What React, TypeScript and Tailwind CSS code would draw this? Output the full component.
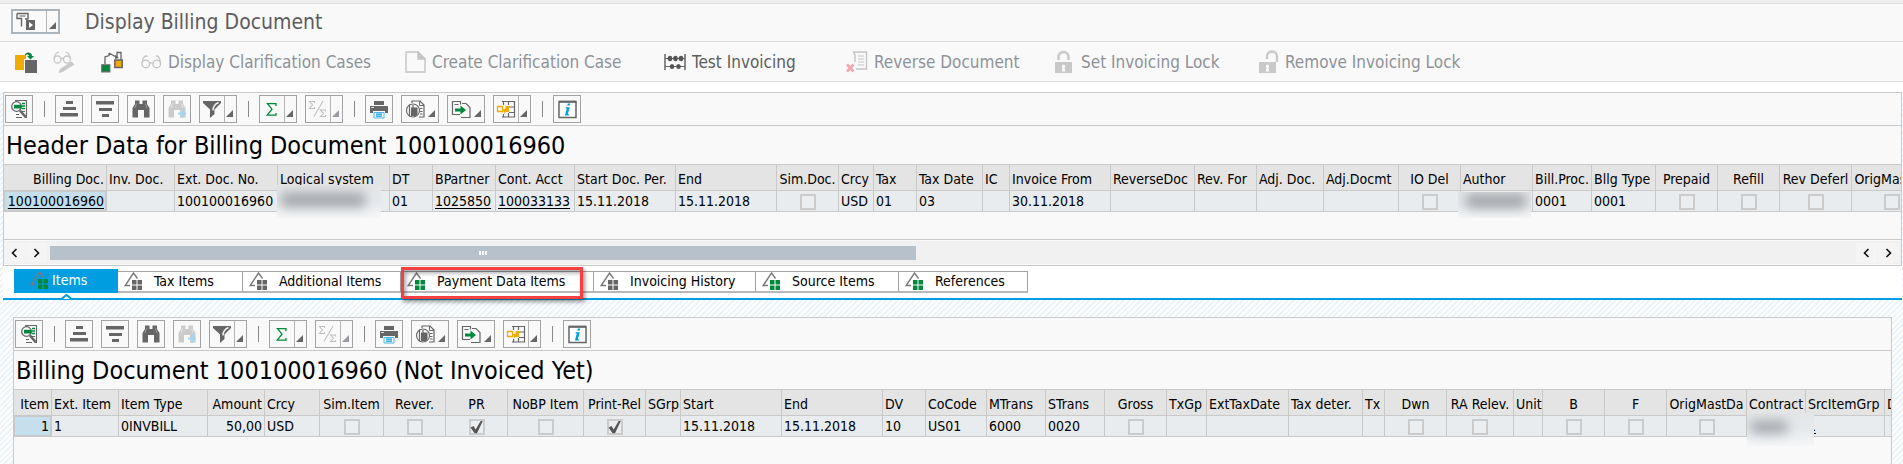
import React from "react";

type Align = "left" | "right" | "center";

interface Column {
  label: string;
  width: string;
  align?: Align;
  value?: string;
  link?: boolean;
  check?: "on" | "off";
  blur?: "system" | "author" | "contract";
}

const headerColumns: Column[] = [
  { label: "Billing Doc.", width: "w-[103px]", align: "right", value: "100100016960", link: true },
  { label: "Inv. Doc.", width: "w-[68px]" },
  { label: "Ext. Doc. No.", width: "w-[103px]", value: "100100016960" },
  { label: "Logical system", width: "w-[112px]", blur: "system" },
  { label: "DT", width: "w-[43px]", value: "01" },
  { label: "BPartner", width: "w-[63px]", value: "1025850", link: true },
  { label: "Cont. Acct", width: "w-[79px]", value: "100033133", link: true },
  { label: "Start Doc. Per.", width: "w-[101px]", value: "15.11.2018" },
  { label: "End", width: "w-[101px]", value: "15.11.2018" },
  { label: "Sim.Doc.", width: "w-[62px]", align: "center", check: "off" },
  { label: "Crcy", width: "w-[35px]", value: "USD" },
  { label: "Tax", width: "w-[43px]", value: "01" },
  { label: "Tax Date", width: "w-[66px]", value: "03" },
  { label: "IC", width: "w-[27px]" },
  { label: "Invoice From", width: "w-[101px]", value: "30.11.2018" },
  { label: "ReverseDoc", width: "w-[84px]" },
  { label: "Rev. For", width: "w-[62px]" },
  { label: "Adj. Doc.", width: "w-[67px]" },
  { label: "Adj.Docmt", width: "w-[75px]" },
  { label: "IO Del", width: "w-[62px]", align: "center", check: "off" },
  { label: "Author", width: "w-[72px]", blur: "author" },
  { label: "Bill.Proc.", width: "w-[59px]", value: "0001" },
  { label: "Bllg Type", width: "w-[64px]", value: "0001" },
  { label: "Prepaid", width: "w-[62px]", align: "center", check: "off" },
  { label: "Refill", width: "w-[62px]", align: "center", check: "off" },
  { label: "Rev Deferl", width: "w-[72px]", align: "center", check: "off" },
  { label: "OrigMastDa", width: "w-[80px]", align: "center", check: "off" },
];

const itemColumns: Column[] = [
  { label: "Item", width: "w-[38px]", align: "right", value: "1" },
  { label: "Ext. Item", width: "w-[67px]", value: "1" },
  { label: "Item Type", width: "w-[89px]", value: "0INVBILL" },
  { label: "Amount", width: "w-[57px]", align: "right", value: "50,00" },
  { label: "Crcy", width: "w-[55px]", value: "USD" },
  { label: "Sim.Item", width: "w-[64px]", align: "center", check: "off" },
  { label: "Rever.", width: "w-[62px]", align: "center", check: "off" },
  { label: "PR", width: "w-[62px]", align: "center", check: "on" },
  { label: "NoBP Item", width: "w-[76px]", align: "center", check: "off" },
  { label: "Print-Rel", width: "w-[62px]", align: "center", check: "on" },
  { label: "SGrp", width: "w-[35px]" },
  { label: "Start", width: "w-[101px]", value: "15.11.2018" },
  { label: "End", width: "w-[101px]", value: "15.11.2018" },
  { label: "DV", width: "w-[43px]", value: "10" },
  { label: "CoCode", width: "w-[61px]", value: "US01" },
  { label: "MTrans", width: "w-[59px]", value: "6000" },
  { label: "STrans", width: "w-[59px]", value: "0020" },
  { label: "Gross", width: "w-[62px]", align: "center", check: "off" },
  { label: "TxGp", width: "w-[40px]" },
  { label: "ExtTaxDate", width: "w-[82px]" },
  { label: "Tax deter.", width: "w-[74px]" },
  { label: "Tx", width: "w-[22px]" },
  { label: "Dwn", width: "w-[62px]", align: "center", check: "off" },
  { label: "RA Relev.", width: "w-[67px]", align: "center", check: "off" },
  { label: "Unit", width: "w-[29px]" },
  { label: "B", width: "w-[62px]", align: "center", check: "off" },
  { label: "F", width: "w-[62px]", align: "center", check: "off" },
  { label: "OrigMastDa", width: "w-[80px]", align: "center", check: "off" },
  { label: "Contract", width: "w-[59px]", blur: "contract" },
  { label: "SrcItemGrp", width: "w-[79px]", value: "1", link: true },
  { label: "D", width: "w-[40px]" },
];

const alignClass: Record<Align, string> = {
  left: "text-left",
  right: "text-right",
  center: "text-center",
};

const smudge = {
  system: { box: "-left-px -top-1.5 h-[33px] w-[104px]", bar: "left-1 top-2 h-3.5 w-[84px]" },
  author: { box: "-left-[3px] top-px h-[26px] w-[73px]", bar: "left-2 top-0.5 h-3.5 w-[60px]" },
  contract: { box: "left-0 -top-[3px] h-[33px] w-[67px]", bar: "left-1 top-2 h-3 w-9" },
};

function Redacted({ kind }: { kind: "system" | "author" | "contract" }) {
  return (
    <span
      aria-hidden="true"
      className={`absolute z-10 overflow-hidden bg-linear-to-b from-[#e4e5e6] via-[#e6eaed] to-[#f5f6f7] ${smudge[kind].box}`}
    >
      <span className={`absolute bg-[#a0a3a8] blur-[6px] ${smudge[kind].bar}`} />
    </span>
  );
}

function CheckCell({ label, on }: { label: string; on: boolean }) {
  return (
    <span className="relative mt-[3px] inline-block size-4 align-top">
      <input
        type="checkbox"
        aria-label={label}
        defaultChecked={on}
        className="block size-4 appearance-none border-2 border-[#cbcbcb] bg-[#ebeef0]"
      />
      {on && (
        <svg className="pointer-events-none absolute inset-0 size-4" viewBox="0 0 16 16" aria-hidden="true">
          <path d="M1.500 8.500 4.500 7l2.200 3.600L11.600 2h2.200L8 14.300H5.600z" fill="#555" />
        </svg>
      )}
    </span>
  );
}

function Grid({ columns, name }: { columns: Column[]; name: string }) {
  return (
    <div className="overflow-x-clip">
      <table aria-label={name} className="w-px table-fixed border-separate border-spacing-0 text-[14px] leading-5 text-black">
        <colgroup>
          {columns.map((c) => (
            <col key={c.label} className={c.width} />
          ))}
        </colgroup>
        <thead>
          <tr className="h-[26px] bg-[#e4e4e4]">
            {columns.map((c) => (
              <th
                key={c.label}
                scope="col"
                className={`overflow-hidden border-r border-b border-[#c9c9c9] px-[2px] pt-0.5 pb-0 font-normal whitespace-nowrap ${alignClass[c.align ?? "left"]}`}
              >
                {c.label}
              </th>
            ))}
          </tr>
        </thead>
        <tbody>
          <tr className="h-[21px] bg-[#e8ecef]">
            {columns.map((c, i) => (
              <td
                key={c.label}
                className={`relative h-[21px] border-r border-b border-[#c9c9c9] px-[2px] py-0 align-top leading-5 whitespace-nowrap ${alignClass[c.align ?? "left"]} ${i === 0 ? "bg-[#c5dfec] shadow-[inset_0_0_0_1px_#c9c9c9]" : ""}`}
              >
                {c.link ? (
                  <a href="#doc" className="underline underline-offset-2">
                    {c.value}
                  </a>
                ) : (
                  c.value
                )}
                {c.check && <CheckCell label={c.label} on={c.check === "on"} />}
                {c.blur && <Redacted kind={c.blur} />}
              </td>
            ))}
          </tr>
        </tbody>
      </table>
    </div>
  );
}

const G = "#666";

const Svg = ({ w = 28, children }: { w?: number; children: React.ReactNode }) => (
  <svg width={w} height={26} viewBox={`0 1 ${w} 26`} fill="none" aria-hidden="true" className="shrink-0">
    {children}
  </svg>
);

const Caret = ({ pale = false }: { pale?: boolean }) => (
  <svg width="7" height="7" viewBox="0 0 7 7" aria-hidden="true">
    <path d="M7 0v7H0z" fill={pale ? "#9a9aa2" : G} />
  </svg>
);

const DetailIcon = () => (
  <Svg w={26}>
    <path d="M9 5.500h11.500v17H19M10 22.500h6" stroke={G} strokeWidth="1.100" />
    <path d="M16 8.500h3M16 11h3M16 13.500h3" stroke="#00883c" strokeWidth="1.300" />
    <path d="M16 16.500h3M10 19.500h3" stroke={G} strokeWidth="1.100" />
    <circle cx="10.500" cy="11.500" r="4.800" fill="#f9f9f9" stroke={G} strokeWidth="1.300" />
    <path d="M8 9.800h7.500v3.700H8z" fill="#00883c" />
    <path d="m14 15.500 6 7" stroke={G} strokeWidth="2.600" />
  </Svg>
);

const AscIcon = () => (
  <Svg w={26}>
    <path d="M10 6h7v3h-7zM7 12h13v3H7zM4 18h18v3.500H4z" fill={G} />
  </Svg>
);

const DescIcon = () => (
  <Svg w={26}>
    <path d="M4 6h18v3.500H4zM7 13h13v3H7zM10 19h7v3h-7z" fill={G} />
  </Svg>
);

const Binoculars = ({ pale = false }: { pale?: boolean }) => (
  <Svg w={26}>
    <path
      d="M7 5.500h4.500V9h3V5.500H19V9l2.500 4v9.500H16V15h-6v7.500H4.500V13L7 9z"
      fill={pale ? "#cbcbcb" : G}
    />
    <path d="M8.500 8.500 7 13M17.500 8.500 19 13" stroke={pale ? "#e4e4e4" : "#999"} strokeWidth="1" />
    {pale && <path d="M18 14v9M14 18.500h8" stroke="#a5d8f3" strokeWidth="2" />}
  </Svg>
);

const FilterIcon = () => (
  <Svg w={24}>
    <path d="M3 6h18v2l-6.500 6.500V19L10 23v-8.500L3 8z" fill={G} />
    <path d="M18.500 7.500c-3.500 1.500-5.500 3.500-5.500 8" stroke="#f3f3f3" strokeWidth="1.400" />
  </Svg>
);

const SumIcon = () => (
  <Svg w={24}>
    <path d="M16 11V8.700H7.500L12 14.200l-4.800 6H16V18" stroke="#00883c" strokeWidth="1.300" />
  </Svg>
);

const SubtotalIcon = () => (
  <Svg w={24}>
    <path d="M8.500 8V6.500h-5l3 3.500-3 3.500h5V12M19.500 16.500v-1.500h-5l3 3.300-3 3.200h5V20M17 6 8 21.500" stroke="#c0c0c0" strokeWidth="1.100" />
  </Svg>
);

const PrintIcon = () => (
  <Svg w={26}>
    <path d="M8 6h10v4H8zM4 11h18v7h-3v-2H7v2H4z" fill={G} />
    <path d="M5 12.500h3" stroke="#d8d8d8" />
    <path d="M8 17.500h10v5.500H8z" fill="#fff" stroke="#4db3e6" />
    <path d="M10 19.200h6M10 21.200h6" stroke="#009ee0" strokeWidth="1.200" />
  </Svg>
);

const ViewIcon = () => (
  <Svg w={24}>
    <path d="M10 8V6h8l4 4v12h-5" stroke={G} strokeWidth="1.200" />
    <path d="M17.500 6v4.500H22M18 13.500h2.500M18 16.500h2.500M18 19h2.500" stroke={G} />
    <circle cx="11" cy="15.500" r="6.500" fill="#f9f9f9" stroke={G} strokeWidth="1.100" />
    <path d="M7.500 9.500v12M11 10v3" stroke={G} strokeWidth="1.200" />
    <path d="M9 12.500h6.500v7l-2 1.500H9z" fill={G} />
  </Svg>
);

const ExportIcon = () => (
  <Svg w={24}>
    <path d="M12 19.500H4.500V6.500h8v3" stroke={G} strokeWidth="1.200" />
    <path d="M6.500 9.500h4" stroke={G} />
    <path d="M14 8.500h4l4 4v10h-9" stroke={G} strokeWidth="1.200" />
    <path d="M7 13.500h5.500v-3l5.500 4.500-5.500 4.500v-3H7z" fill="#00883c" />
  </Svg>
);

const LayoutIcon = () => (
  <Svg w={24}>
    <path d="M8 6.500h13M15 12h6M15 17.500h6M8 22h13M9.500 6v4M14.500 6v4M14.500 18v4M20.500 6v16M9.500 19v3" stroke={G} strokeWidth="1.200" />
    <path d="M3.500 11.500h5v5h-5z" stroke="#f0ab00" strokeWidth="1.300" />
    <path d="M9 14h2.500v-3h3.500v6h-3.500l-1.500 1.500z" fill="#f0ab00" />
  </Svg>
);

const InfoIcon = () => (
  <Svg w={26}>
    <path d="M5 6.500h17v16H5z" fill="#fff" stroke={G} strokeWidth="1.500" />
    <path d="M5 6.800h17" stroke={G} strokeWidth="2" />
    <path d="M13.800 8.500h2.500l-.6 2h-2.400zM11.800 12.200h4l-2 7h1.500l-.4 1.300h-4l1.900-7h-1.300z" fill="#009ee0" />
  </Svg>
);

function ToolButton({ label, children, disabled }: { label: string; children: React.ReactNode; disabled?: boolean }) {
  return (
    <button type="button" aria-label={label} disabled={disabled} className="flex h-7 w-7 items-center border border-[#a3a3a3] bg-[#f9f9f9]">
      {children}
    </button>
  );
}

function MenuButton({
  label,
  children,
  split = false,
  pale = false,
}: {
  label: string;
  children: React.ReactNode;
  split?: boolean;
  pale?: boolean;
}) {
  return (
    <button type="button" aria-label={label} disabled={pale} className="flex h-7 w-[38px] border border-[#a3a3a3] bg-[#f9f9f9]">
      {children}
      <span className={`flex h-full flex-1 items-end justify-end pr-[3px] pb-[5px] ${split ? "border-l border-[#b5b5b5]" : ""}`}>
        <Caret pale={pale} />
      </span>
    </button>
  );
}

const Divider = () => (
  <span className="flex w-1.5 justify-center">
    <span className="h-4 w-px bg-[#8a8a8a]" />
  </span>
);

function GridToolbar() {
  return (
    <div role="toolbar" className="flex h-[33px] items-center gap-2 border-b border-[#c9c9c9] pl-px">
      <ToolButton label="Details"><DetailIcon /></ToolButton>
      <Divider />
      <ToolButton label="Sort in Ascending Order"><AscIcon /></ToolButton>
      <ToolButton label="Sort in Descending Order"><DescIcon /></ToolButton>
      <ToolButton label="Find"><Binoculars /></ToolButton>
      <ToolButton label="Find Next" disabled><Binoculars pale /></ToolButton>
      <MenuButton label="Set Filter" split><FilterIcon /></MenuButton>
      <Divider />
      <MenuButton label="Total" split><SumIcon /></MenuButton>
      <MenuButton label="Subtotals" split pale><SubtotalIcon /></MenuButton>
      <Divider />
      <ToolButton label="Print"><PrintIcon /></ToolButton>
      <MenuButton label="Views"><ViewIcon /></MenuButton>
      <MenuButton label="Export"><ExportIcon /></MenuButton>
      <MenuButton label="Choose Layout" split><LayoutIcon /></MenuButton>
      <Divider />
      <ToolButton label="Information"><InfoIcon /></ToolButton>
    </div>
  );
}

const Glasses = () => (
  <svg width="21" height="22" viewBox="0 0 22 22" fill="none" stroke="#c4c4c4" strokeWidth="1.400" aria-hidden="true">
    <circle cx="5" cy="13" r="4" />
    <circle cx="16.500" cy="13" r="4" />
    <path d="M1 12C2 6 4 4 7 5M20.500 12c-1-6-2.500-8-5-7M9 12.500c1-1 2.500-1 3.500 0" />
  </svg>
);

const EditGlasses = () => (
  <svg width="22" height="22" viewBox="0 0 22 22" fill="none" stroke="#c8c8c8" strokeWidth="1.300" aria-hidden="true">
    <circle cx="4.500" cy="8.500" r="3.500" />
    <circle cx="14" cy="8.500" r="3.500" />
    <path d="M1 7.500C2 3 3.500 1 6 1.500M17.500 7.500c-1-4.500-2.500-6.500-5-6M8 8c1-1 1.800-1 2.500 0" />
    <path d="m18.500 10.500 3 3-12 7.500-4 1 1.500-4z" fill="#c8c8c8" stroke="none" />
  </svg>
);

const PasteIcon = () => (
  <svg width="22" height="22" viewBox="0 0 22 22" aria-hidden="true">
    <path d="M0 4h11v4H9v11H0z" fill="#f0ab00" />
    <path d="M10 9h12v13H10z" fill="#666" />
    <path d="M10 3c3-3 7-1.500 7 2h2l-3.500 3.500L12 5h2c0-1.500-2-2-4-1z" fill="#00883c" />
  </svg>
);

const FlowIcon = () => (
  <svg width="22" height="22" viewBox="0 0 22 22" fill="none" aria-hidden="true">
    <path d="M4 13V6l4-1.500V2M8 2l8 4.500M16 6V1.500h4V9" stroke="#666" strokeWidth="1.300" />
    <path d="M14 3.500 18 7l-4 1z" fill="#666" />
    <path d="M.8 13.800h8v7h-8z" fill="#00883c" stroke="#666" strokeWidth="1.200" />
    <path d="M13.800 9h7.400v7.400h-7.400z" fill="#f0ab00" stroke="#666" strokeWidth="1.500" />
  </svg>
);

const PageIcon = () => (
  <svg width="21" height="22" viewBox="0 0 21 22" fill="none" stroke="#c4c4c4" strokeWidth="1.400" aria-hidden="true">
    <path d="M1 1h12l7 7v13H1z" />
    <path d="M13 1v7h7z" fill="#c4c4c4" />
  </svg>
);

const AbacusIcon = () => (
  <svg width="22" height="22" viewBox="0 0 22 22" fill="none" aria-hidden="true">
    <path d="M1 3v16M21 3v16" stroke="#666" strokeWidth="1.500" />
    <path d="M1 7.500h20M1 15.500h20" stroke="#666" strokeWidth="1.200" />
    <g fill="#555">
      <ellipse cx="6" cy="7.500" rx="2.300" ry="2.800" />
      <ellipse cx="11.500" cy="7.500" rx="2.300" ry="2.800" />
      <ellipse cx="17" cy="7.500" rx="2.300" ry="2.800" />
      <ellipse cx="8" cy="15.500" rx="2.300" ry="2.500" />
      <ellipse cx="14.500" cy="15.500" rx="2.300" ry="2.500" />
    </g>
  </svg>
);

const ReverseIcon = () => (
  <svg width="22" height="22" viewBox="0 0 22 22" fill="none" aria-hidden="true">
    <path d="M9 11V4L7.500 1h13v17H10" stroke="#c4c4c4" strokeWidth="1.400" />
    <path d="M12 5h6M12 8h6M12 11h6M12 14h6" stroke="#c4c4c4" strokeWidth="1.200" />
    <path d="m1 13.500 6.500 7M7.500 13.500 1 20.500" stroke="#f0a8ae" strokeWidth="2.600" />
  </svg>
);

const LockIcon = ({ open = false }: { open?: boolean }) => (
  <svg width="21" height="24" viewBox="0 0 21 24" fill="none" aria-hidden="true">
    <path d={open ? "M9 9V6.500a5 5 0 0 1 10 0V12" : "M4.500 10V7a5 5 0 0 1 10 0v3"} stroke="#c8c8c8" strokeWidth="2.400" />
    <path d="M1 12h17v11H1z" fill="#c8c8c8" />
    <path d="M9.500 14.500a2 2 0 0 1 1 3.500l.8 3.500H7.700l.8-3.500a2 2 0 0 1 1-3.500z" fill="#f9f9f9" />
  </svg>
);

const TabIcon = ({ squares }: { squares: string }) => (
  <svg width="18" height="18" viewBox="0 0 18 18" fill="none" aria-hidden="true" className="shrink-0">
    <path d="M6 13.500H1.200L9.500 1l4 5.500" stroke="#7a7a7a" strokeWidth="1.400" />
    <path d="M8 8h4.500v4.500H8zM13.500 8H18v4.500h-4.500zM8 13.500h4.500V18H8zM13.500 13.500H18V18h-4.500z" fill={squares} />
  </svg>
);

const actions = [
  { label: "Display Clarification Cases", icon: <Glasses />, width: "w-[264px]", on: false },
  { label: "Create Clarification Case", icon: <PageIcon />, width: "w-[259px]", on: false },
  { label: "Test Invoicing", icon: <AbacusIcon />, width: "w-[182px]", on: true },
  { label: "Reverse Document", icon: <ReverseIcon />, width: "w-[208px]", on: false },
  { label: "Set Invoicing Lock", icon: <LockIcon />, width: "w-[204px]", on: false },
  { label: "Remove Invoicing Lock", icon: <LockIcon open />, width: "w-[240px]", on: false },
];

const tabs = [
  { label: "Tax Items", width: "w-[125px]", squares: "#666" },
  { label: "Additional Items", width: "w-[158px]", squares: "#666" },
  { label: "Payment Data Items", width: "w-[193px]", squares: "#00883c", marked: true },
  { label: "Invoicing History", width: "w-[162px]", squares: "#666" },
  { label: "Source Items", width: "w-[143px]", squares: "#00883c" },
  { label: "References", width: "w-[129px]", squares: "#00883c" },
];

function ScrollArrow({ dir }: { dir: "left" | "right" }) {
  return (
    <button
      type="button"
      aria-label={dir === "left" ? "Scroll left" : "Scroll right"}
      className="flex h-5 w-[21px] items-center justify-center bg-[#f4f4f4]"
    >
      <svg width="7" height="10" viewBox="0 0 7 10" fill="none" stroke="#111" strokeWidth="1.600" aria-hidden="true">
        <path d={dir === "left" ? "M5.500 1 1.500 5l4 4" : "m1.500 1 4 4-4 4"} />
      </svg>
    </button>
  );
}

export default function App() {
  return (
    <div className="flex min-h-screen flex-col overflow-hidden bg-[repeating-linear-gradient(135deg,#ffffff_0px,#ffffff_2px,#eaf4fa_2px,#eaf4fa_4px)] font-['DejaVu_Sans_Condensed','DejaVu_Sans',sans-serif]">
      <header className="border-t-[3px] border-[#f0f0f0] bg-[#f9f9f9]">
        <div className="flex h-[39px] items-center gap-[25px] border-y border-[#dcdcdc] pb-0.5 pl-[11px]">
          <button type="button" aria-label="Services" className="flex h-[25px] w-[49px] border-2 border-[#a9b4bd] bg-[#f9f9f9]">
            <svg width="33" height="21" viewBox="0 0 33 21" fill="none" aria-hidden="true">
              <path d="M4 2.500h11v5.500h-3M4 2.500v5h4.500v8" stroke="#666" strokeWidth="1.400" />
              <path d="M6.500 5h6" stroke="#666" />
              <path d="M13 9h9v10h-9z" fill="#666" />
              <path d="m16 11 4 3-4 3z" fill="#fff" />
            </svg>
            <span className="flex h-full flex-1 items-end justify-center border-l border-[#b5b5b5] pb-[3px]">
              <Caret />
            </span>
          </button>
          <h1 className="text-[21px] leading-6 text-[#5d5d5d]">Display Billing Document</h1>
        </div>
        <div className="flex h-10 items-center border-b border-[#dcdcdc] pl-[15px]">
          <button type="button" aria-label="Other Document" className="w-[38px]"><PasteIcon /></button>
          <button type="button" aria-label="Display or Change" disabled className="w-12"><EditGlasses /></button>
          <button type="button" aria-label="Document Flow" className="w-10"><FlowIcon /></button>
          {actions.map((a) => (
            <button
              key={a.label}
              type="button"
              disabled={!a.on}
              className={`flex shrink-0 items-center gap-1.5 text-[17px] leading-6 whitespace-nowrap ${a.width} ${a.on ? "text-[#5d5d5d]" : "text-[#8e9299]"}`}
            >
              {a.icon}
              {a.label}
            </button>
          ))}
        </div>
      </header>
      <div className="h-2.5 bg-white" />

      <section className="mr-px ml-[3px] border border-[#c9c9c9] bg-[#f9f9f9]">
        <GridToolbar />
        <h2 className="flex h-[39px] items-center border-b border-[#c9c9c9] pt-0.5 pl-0.5 text-[25px] leading-8 text-black">
          Header Data for Billing Document 100100016960
        </h2>
        <Grid columns={headerColumns} name="Header Data" />
        <div className="h-7 border-b border-[#c9c9c9]" />
        <div className="my-px flex h-[23px] items-center gap-px bg-[#f1f1f1] pr-0.5">
          <ScrollArrow dir="left" />
          <ScrollArrow dir="right" />
          <div className="ml-0.5 h-full flex-1 pt-[5px]">
            <div className="flex h-3.5 w-[48%] items-center justify-center gap-px bg-[#b7c1cc]">
              <span className="h-1 w-0.5 bg-white" />
              <span className="h-1 w-0.5 bg-white" />
              <span className="h-1 w-0.5 bg-white" />
            </div>
          </div>
          <ScrollArrow dir="left" />
          <ScrollArrow dir="right" />
        </div>
      </section>

      <nav className="mr-px ml-[3px] border-b-2 border-[#009ee0] bg-white">
        <div role="tablist" className="flex h-8 items-end pb-[5px] pl-[11px] text-[14px] leading-5">
          <button
            role="tab"
            aria-selected="true"
            type="button"
            className="relative flex h-6 w-[104px] items-center gap-1 bg-[#009ee0] pb-0.5 pl-4 text-white"
          >
            <TabIcon squares="#00883c" />
            Items
            <svg className="absolute top-6 left-[47px]" width="11" height="7" viewBox="0 0 11 7" fill="#fff" stroke="#009ee0" strokeWidth="2" aria-hidden="true">
              <path d="M.5 6 5.500 2l5 4" />
            </svg>
          </button>
          {tabs.map((t) => (
            <button
              key={t.label}
              role="tab"
              aria-selected="false"
              type="button"
              className={`relative flex h-[22px] items-center gap-3 border-t border-r border-b-2 border-t-[#a3a3a3] border-r-[#a3a3a3] border-b-[#b9b9b9] bg-white pb-0.5 pl-1.5 whitespace-nowrap text-black ${t.width}`}
            >
              <TabIcon squares={t.squares} />
              {t.label}
              {t.marked && (
                <span className="absolute -top-[5px] left-0 z-10 h-8 w-[182px] border-3 border-[#f53f41] shadow-[2px_3px_4px_rgba(0,0,0,0.4),inset_2px_3px_4px_rgba(0,0,0,0.35)]" />
              )}
            </button>
          ))}
        </div>
      </nav>

      <main className="flex flex-1 flex-col pt-[17px] pr-[11px] pl-[13px]">
        <section className="flex-1 border border-b-0 border-[#c9c9c9] bg-[#f9f9f9]">
          <GridToolbar />
          <h2 className="flex h-[39px] items-center border-b border-[#c9c9c9] pt-0.5 pl-0.5 text-[25px] leading-8 text-black">
            Billing Document 100100016960 (Not Invoiced Yet)
          </h2>
          <Grid columns={itemColumns} name="Billing Document Items" />
        </section>
      </main>
    </div>
  );
}
